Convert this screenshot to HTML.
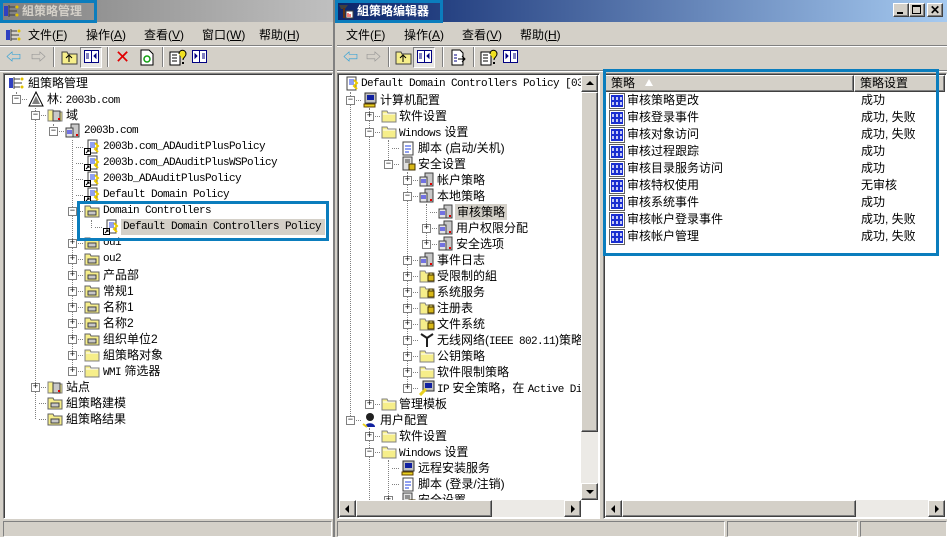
<!DOCTYPE html>
<html><head><meta charset="utf-8">
<style>
*{margin:0;padding:0;box-sizing:border-box}
body{width:947px;height:537px;overflow:hidden;background:#D4D0C8;position:relative;font-family:"Liberation Sans","Noto Sans CJK SC",sans-serif;font-size:12px;color:#000}
.a{position:absolute;white-space:nowrap}
.l{font-family:"Liberation Mono",monospace;font-size:11px;letter-spacing:-0.6px}
.r{position:absolute;height:16px;line-height:16px;white-space:nowrap}
.ic{position:absolute;width:16px;height:16px}
.ic::before{content:'';position:absolute;left:-8px;top:8px;width:7px;border-top:1px dotted #808080}
.ic.n::before{display:none}
.ex{position:absolute;width:9px;height:9px;border:1px solid #808080;background:#fff;font:9px/7px "Liberation Mono",monospace;text-align:center;z-index:2}
.v{position:absolute;border-left:1px dotted #808080;width:0}
.rb{position:absolute;background:#D4D0C8;border:1px solid;border-color:#fff #404040 #404040 #fff;box-shadow:inset -1px -1px #808080;white-space:nowrap}
.sk{position:absolute;border:1px solid;border-color:#808080 #fff #fff #808080;box-shadow:inset 1px 1px #404040}
.box{position:absolute;border:3px solid #0B7DBD;z-index:5}
.sep{position:absolute;width:2px;height:20px;border-left:1px solid #808080;border-right:1px solid #fff}
.tri{position:absolute;width:0;height:0}
.mn span{position:absolute;top:0}
svg{display:block}
</style></head><body>
<svg width="0" height="0" style="position:absolute">
<defs>
<symbol id="fo" viewBox="0 0 16 16"><path d="M1 3h5l1 2h8v9H1z" fill="#F6EE8A" stroke="#808080"/><path d="M2 6h12" stroke="#fff"/></symbol>
<symbol id="lf" viewBox="0 0 16 16"><path d="M1 3h5l1 2h8v9H1z" fill="#F6EE8A" stroke="#808080"/><rect x="9" y="7" width="6" height="6" fill="#D8B818" stroke="#403000"/><path d="M10 7V5h4v2" stroke="#403000" fill="none"/></symbol>
<symbol id="ou" viewBox="0 0 16 16"><path d="M1 3h5l1 2h8v9H1z" fill="#F6EE8A" stroke="#606060"/><path d="M4 8h8v4H4z" fill="#C8C8C8" stroke="#404040"/></symbol>
<symbol id="sv" viewBox="0 0 16 16"><rect x="6" y="1" width="8" height="13" fill="#C8C8C8" stroke="#404040"/><rect x="1" y="5" width="7" height="9" fill="#E4E4E4" stroke="#404040"/><path d="M2 8h5M2 10h5" stroke="#0000E0"/><rect x="11" y="11" width="2" height="2" fill="#E00000"/></symbol>
<symbol id="gp" viewBox="0 0 16 16"><rect x="4" y="1" width="9" height="13" fill="#fff" stroke="#404040"/><path d="M6 4h5M6 6h5M6 8h5" stroke="#2040E0"/><path d="M11 4l3 3-3 3 3 3" stroke="#E8C800" fill="none" stroke-width="2"/></symbol>
<symbol id="gl" viewBox="0 0 16 16"><rect x="4" y="1" width="9" height="13" fill="#fff" stroke="#404040"/><path d="M6 4h5M6 6h5M6 8h5" stroke="#2040E0"/><path d="M11 4l3 3-3 3 3 3" stroke="#E8C800" fill="none" stroke-width="2"/><rect x="0.5" y="9.5" width="6" height="6" fill="#fff" stroke="#000"/><path d="M2 14l3-3M3 11h2v2" stroke="#000" fill="none"/></symbol>
<symbol id="au" viewBox="0 0 16 16"><rect x="0.5" y="0.5" width="15" height="15" fill="#fff" stroke="#606060"/><rect x="2" y="2" width="12" height="12" fill="#1A2ED0"/><path d="M4 4v3M8 4v3M12 4v3M4 9v3M8 9v3M12 9v3" stroke="#fff" stroke-width="1.5"/></symbol>
<symbol id="pc" viewBox="0 0 16 16"><rect x="3" y="1" width="11" height="10" fill="#C0C0C0" stroke="#303030"/><rect x="5" y="3" width="7" height="5" fill="#1020A0"/><path d="M2 12h11v3H2z" fill="#E8D020" stroke="#604000"/></symbol>
<symbol id="us" viewBox="0 0 16 16"><circle cx="8" cy="5" r="4" fill="#202020"/><path d="M3 15c0-5 10-5 10 0z" fill="#1020A0"/><path d="M1 12l4 3" stroke="#E8D020" stroke-width="2"/></symbol>
<symbol id="sc" viewBox="0 0 16 16"><rect x="3" y="2" width="10" height="13" fill="#fff" stroke="#404040"/><path d="M5 6h6M5 9h6M5 12h4" stroke="#2040E0"/></symbol>
<symbol id="ss" viewBox="0 0 16 16"><rect x="3" y="1" width="9" height="13" fill="#E0E0E0" stroke="#404040"/><path d="M5 4h5M5 6h5" stroke="#404040"/><rect x="9" y="8" width="6" height="6" fill="#D8B818" stroke="#403000"/></symbol>
<symbol id="tr" viewBox="0 0 16 16"><path d="M8 1L1 15h14z" fill="#fff" stroke="#000"/><path d="M8 5L4 13h8z" fill="#808080"/></symbol>
<symbol id="dm" viewBox="0 0 16 16"><path d="M1 3h5l1 2h8v9H1z" fill="#F6EE8A" stroke="#808080"/><rect x="6" y="4" width="7" height="10" fill="#C8C8C8" stroke="#404040"/><rect x="11" y="11" width="2" height="2" fill="#E00000"/></symbol>
<symbol id="gm" viewBox="0 0 16 16"><rect x="1" y="3" width="4" height="10" fill="#3040C0"/><path d="M6 2v12M6 4h6M6 8h8M6 12h6" stroke="#404040"/><circle cx="14" cy="4" r="1.5" fill="#E0C000"/><circle cx="14" cy="12" r="1.5" fill="#E0C000"/></symbol>
<symbol id="ant" viewBox="0 0 16 16"><path d="M8 6v9M2 2l6 4 6-4" stroke="#202020" stroke-width="2" fill="none"/></symbol>
<symbol id="ip" viewBox="0 0 16 16"><rect x="4" y="1" width="11" height="10" fill="#C0C0C0" stroke="#303030"/><rect x="6" y="3" width="7" height="5" fill="#1020A0"/><path d="M1 15l6-6" stroke="#E8D020" stroke-width="3"/></symbol>
</defs></svg>

<!-- ================= LEFT WINDOW ================= -->
<div class="a" style="left:0;top:0;width:334px;height:22px;background:linear-gradient(90deg,#808080,#C0C0C0)"></div>
<div class="a" style="left:3px;top:3px"><svg width="16" height="16"><use href="#gm"/></svg></div>
<div class="a" style="left:22px;top:3px;color:#D4D0C8;font-weight:bold;font-size:12px;line-height:16px">組策略管理</div>
<div class="box" style="left:0;top:0;width:97px;height:23px"></div>
<div class="a" style="left:333px;top:0;width:2px;height:537px;background:#808080"></div>

<div class="a mn" style="left:0;top:26px;width:332px;height:18px;line-height:18px">
<svg class="a" style="left:5px;top:1px" width="16" height="16"><use href="#gm"/></svg>
<span style="left:28px">文件(<u>F</u>)</span><span style="left:86px">操作(<u>A</u>)</span><span style="left:144px">查看(<u>V</u>)</span><span style="left:202px">窗口(<u>W</u>)</span><span style="left:259px">帮助(<u>H</u>)</span>
</div>
<div class="a" style="left:0;top:45px;width:332px;border-top:1px solid #808080;border-bottom:1px solid #fff"></div>
<div class="a" style="left:6px;top:50px;color:#1E9BD8;font-size:15px;line-height:16px">&#x21E6;</div>
<div class="a" style="left:31px;top:50px;color:#909090;font-size:15px;line-height:16px">&#x21E8;</div>
<div class="sep" style="left:53px;top:47px"></div>
<svg class="a" style="left:61px;top:49px" width="17" height="17"><path d="M1 3h5l1 2h9v10H1z" fill="#F6EE8A" stroke="#404040"/><path d="M8 13V7M5 9l3-3 3 3" stroke="#000" fill="none"/></svg>
<div class="a" style="left:80px;top:47px;width:22px;height:21px;border:1px solid;border-color:#808080 #fff #fff #808080;background:#E8E6E2"></div>
<svg class="a" style="left:84px;top:50px" width="16" height="14"><rect x="0.5" y="0.5" width="14" height="12" fill="#fff" stroke="#000080"/><rect x="7" y="1" width="1" height="11" fill="#000080"/><path d="M2 4h3M2 6h3M2 8h3M10 6l2-2v4z" stroke="#000080" fill="#000080"/></svg>
<div class="sep" style="left:107px;top:47px"></div>
<div class="a" style="left:115px;top:47px;color:#E00000;font-size:18px;line-height:20px">✕</div>
<svg class="a" style="left:139px;top:49px" width="16" height="17"><path d="M2 1h8l4 4v11H2z" fill="#fff" stroke="#000"/><circle cx="8" cy="10" r="3" fill="none" stroke="#10A010" stroke-width="1.5"/></svg>
<div class="sep" style="left:162px;top:47px"></div>
<svg class="a" style="left:169px;top:48px" width="18" height="18"><rect x="1" y="4" width="10" height="13" fill="#fff" stroke="#000"/><path d="M3 7h5M3 10h5M3 13h5" stroke="#000"/><path d="M10 6c0-5 7-5 7 0 0 3-3 3-3 6" stroke="#000" stroke-width="1" fill="#F0E020"/><rect x="13" y="14" width="2" height="2"/></svg>
<svg class="a" style="left:192px;top:50px" width="16" height="14"><rect x="0.5" y="0.5" width="14" height="12" fill="#fff" stroke="#000080"/><rect x="7" y="1" width="1" height="11" fill="#000080"/><path d="M10 4h3M10 6h3M10 8h3M3 4l2 2-2 2z" stroke="#000080" fill="#000080"/></svg>
<div class="a" style="left:0;top:70px;width:333px;border-top:1px solid #808080;border-bottom:1px solid #fff"></div>

<div class="sk" style="left:3px;top:73px;width:330px;height:446px;background:#fff;overflow:hidden">
<div class="a" style="left:-4px;top:-74px;width:340px;height:540px">
<div class="v" style="left:35px;top:108px;height:311px"></div>
<div class="v" style="left:16px;top:92px;height:8px"></div>
<div class="v" style="left:53px;top:124px;height:8px"></div>
<div class="v" style="left:72px;top:140px;height:231px"></div>
<div class="v" style="left:91px;top:220px;height:8px"></div>

<div class="r" style="left:8px;top:75px"><span class="ic n" style="left:0"><svg width="16" height="16"><use href="#gm"/></svg></span><span style="position:absolute;left:20px">組策略管理</span></div>
<div class="ex" style="left:12px;top:95px">−</div><div class="r" style="left:28px;top:91px"><span class="ic"><svg width="16" height="16"><use href="#tr"/></svg></span><span style="position:absolute;left:19px">林: <span class="l">2003b.com</span></span></div>
<div class="ex" style="left:31px;top:111px">−</div><div class="r" style="left:47px;top:107px"><span class="ic"><svg width="16" height="16"><use href="#dm"/></svg></span><span style="position:absolute;left:19px">域</span></div>
<div class="ex" style="left:49px;top:127px">−</div><div class="r" style="left:65px;top:123px"><span class="ic"><svg width="16" height="16"><use href="#sv"/></svg></span><span style="position:absolute;left:19px" class="l">2003b.com</span></div>
<div class="r" style="left:84px;top:139px"><span class="ic"><svg width="16" height="16"><use href="#gl"/></svg></span><span style="position:absolute;left:19px" class="l">2003b.com_ADAuditPlusPolicy</span></div>
<div class="r" style="left:84px;top:155px"><span class="ic"><svg width="16" height="16"><use href="#gl"/></svg></span><span style="position:absolute;left:19px" class="l">2003b.com_ADAuditPlusWSPolicy</span></div>
<div class="r" style="left:84px;top:171px"><span class="ic"><svg width="16" height="16"><use href="#gl"/></svg></span><span style="position:absolute;left:19px" class="l">2003b_ADAuditPlusPolicy</span></div>
<div class="r" style="left:84px;top:187px"><span class="ic"><svg width="16" height="16"><use href="#gl"/></svg></span><span style="position:absolute;left:19px" class="l">Default Domain Policy</span></div>
<div class="ex" style="left:68px;top:207px">−</div><div class="r" style="left:84px;top:203px"><span class="ic"><svg width="16" height="16"><use href="#ou"/></svg></span><span style="position:absolute;left:19px" class="l">Domain Controllers</span></div>
<div class="r" style="left:103px;top:219px"><span class="ic"><svg width="16" height="16"><use href="#gl"/></svg></span><span style="position:absolute;left:18px;background:#D4D0C8;padding:0 2px;width:204px" class="l">Default Domain Controllers Policy</span></div>
<div class="ex" style="left:68px;top:239px">+</div><div class="r" style="left:84px;top:235px"><span class="ic"><svg width="16" height="16"><use href="#ou"/></svg></span><span style="position:absolute;left:19px" class="l">ou1</span></div>
<div class="ex" style="left:68px;top:255px">+</div><div class="r" style="left:84px;top:251px"><span class="ic"><svg width="16" height="16"><use href="#ou"/></svg></span><span style="position:absolute;left:19px" class="l">ou2</span></div>
<div class="ex" style="left:68px;top:271px">+</div><div class="r" style="left:84px;top:267px"><span class="ic"><svg width="16" height="16"><use href="#ou"/></svg></span><span style="position:absolute;left:19px">产品部</span></div>
<div class="ex" style="left:68px;top:287px">+</div><div class="r" style="left:84px;top:283px"><span class="ic"><svg width="16" height="16"><use href="#ou"/></svg></span><span style="position:absolute;left:19px">常规1</span></div>
<div class="ex" style="left:68px;top:303px">+</div><div class="r" style="left:84px;top:299px"><span class="ic"><svg width="16" height="16"><use href="#ou"/></svg></span><span style="position:absolute;left:19px">名称1</span></div>
<div class="ex" style="left:68px;top:319px">+</div><div class="r" style="left:84px;top:315px"><span class="ic"><svg width="16" height="16"><use href="#ou"/></svg></span><span style="position:absolute;left:19px">名称2</span></div>
<div class="ex" style="left:68px;top:335px">+</div><div class="r" style="left:84px;top:331px"><span class="ic"><svg width="16" height="16"><use href="#ou"/></svg></span><span style="position:absolute;left:19px">组织单位2</span></div>
<div class="ex" style="left:68px;top:351px">+</div><div class="r" style="left:84px;top:347px"><span class="ic"><svg width="16" height="16"><use href="#fo"/></svg></span><span style="position:absolute;left:19px">組策略对象</span></div>
<div class="ex" style="left:68px;top:367px">+</div><div class="r" style="left:84px;top:363px"><span class="ic"><svg width="16" height="16"><use href="#fo"/></svg></span><span style="position:absolute;left:19px"><span class="l">WMI</span> 筛选器</span></div>
<div class="ex" style="left:31px;top:383px">+</div><div class="r" style="left:47px;top:379px"><span class="ic"><svg width="16" height="16"><use href="#dm"/></svg></span><span style="position:absolute;left:19px">站点</span></div>
<div class="r" style="left:47px;top:395px"><span class="ic"><svg width="16" height="16"><use href="#ou"/></svg></span><span style="position:absolute;left:19px">組策略建模</span></div>
<div class="r" style="left:47px;top:411px"><span class="ic"><svg width="16" height="16"><use href="#ou"/></svg></span><span style="position:absolute;left:19px">組策略结果</span></div>
</div></div>
<div class="box" style="left:77px;top:201px;width:252px;height:40px"></div>
<div class="sk" style="left:3px;top:521px;width:329px;height:16px;box-shadow:none"></div>

<!-- ================= RIGHT WINDOW ================= -->
<div class="a" style="left:335px;top:0;width:612px;height:22px;background:linear-gradient(90deg,#0A246A,#A6CAF0)"></div>
<svg class="a" style="left:338px;top:3px" width="16" height="16"><path d="M1 2h9l-3 4H3z" fill="#404040"/><rect x="5" y="5" width="2" height="10" fill="#603010"/><rect x="8" y="8" width="7" height="7" fill="#fff" stroke="#404040"/><path d="M10 14v-4M12 14v-3" stroke="#E00000"/></svg>
<div class="a" style="left:357px;top:3px;color:#fff;font-weight:bold;line-height:16px">組策略编辑器</div>
<div class="box" style="left:335px;top:0;width:108px;height:23px"></div>
<div class="rb" style="left:893px;top:3px;width:16px;height:14px"><div class="a" style="left:3px;top:8px;width:6px;height:2px;background:#000"></div></div>
<div class="rb" style="left:909px;top:3px;width:16px;height:14px"><div class="a" style="left:2px;top:1px;width:9px;height:9px;border:1px solid #000;border-top-width:2px"></div></div>
<div class="rb" style="left:927px;top:3px;width:16px;height:14px;font:bold 12px/12px 'Liberation Sans';text-align:center">✕</div>

<div class="a mn" style="left:335px;top:26px;width:612px;height:18px;line-height:18px">
<span style="left:11px">文件(<u>F</u>)</span><span style="left:69px">操作(<u>A</u>)</span><span style="left:127px">查看(<u>V</u>)</span><span style="left:185px">帮助(<u>H</u>)</span>
</div>
<div class="a" style="left:337px;top:45px;width:610px;border-top:1px solid #808080;border-bottom:1px solid #fff"></div>
<div class="a" style="left:343px;top:50px;color:#1E9BD8;font-size:15px;line-height:16px">&#x21E6;</div>
<div class="a" style="left:366px;top:50px;color:#909090;font-size:15px;line-height:16px">&#x21E8;</div>
<div class="sep" style="left:388px;top:47px"></div>
<svg class="a" style="left:395px;top:49px" width="17" height="17"><path d="M1 3h5l1 2h9v10H1z" fill="#F6EE8A" stroke="#404040"/><path d="M8 13V7M5 9l3-3 3 3" stroke="#000" fill="none"/></svg>
<div class="a" style="left:413px;top:47px;width:22px;height:21px;border:1px solid;border-color:#808080 #fff #fff #808080;background:#E8E6E2"></div>
<svg class="a" style="left:417px;top:50px" width="16" height="14"><rect x="0.5" y="0.5" width="14" height="12" fill="#fff" stroke="#000080"/><rect x="7" y="1" width="1" height="11" fill="#000080"/><path d="M2 4h3M2 6h3M2 8h3M10 6l2-2v4z" stroke="#000080" fill="#000080"/></svg>
<div class="sep" style="left:442px;top:47px"></div>
<svg class="a" style="left:450px;top:49px" width="16" height="17"><path d="M2 1h8l3 3v12H2z" fill="#fff" stroke="#000"/><path d="M4 6h3M4 9h3M4 12h3" stroke="#000080"/><path d="M8 10h7M12 7l3 3-3 3" stroke="#000" fill="none"/></svg>
<div class="sep" style="left:473px;top:47px"></div>
<svg class="a" style="left:480px;top:48px" width="18" height="18"><rect x="1" y="4" width="10" height="13" fill="#fff" stroke="#000"/><path d="M3 7h5M3 10h5M3 13h5" stroke="#000"/><path d="M10 6c0-5 7-5 7 0 0 3-3 3-3 6" stroke="#000" fill="#F0E020"/><rect x="13" y="14" width="2" height="2"/></svg>
<svg class="a" style="left:503px;top:50px" width="16" height="14"><rect x="0.5" y="0.5" width="14" height="12" fill="#fff" stroke="#000080"/><rect x="7" y="1" width="1" height="11" fill="#000080"/><path d="M10 4h3M10 6h3M10 8h3M3 4l2 2-2 2z" stroke="#000080" fill="#000080"/></svg>
<div class="a" style="left:337px;top:70px;width:610px;border-top:1px solid #808080;border-bottom:1px solid #fff"></div>

<div class="sk" style="left:337px;top:73px;width:263px;height:446px;background:#fff"></div>
<div class="a" style="left:339px;top:75px;width:242px;height:425px;overflow:hidden;background:#fff">
<div class="a" style="left:-339px;top:-75px;width:600px;height:540px">
<div class="v" style="left:350px;top:92px;height:328px"></div>
<div class="v" style="left:369px;top:108px;height:296px"></div>
<div class="v" style="left:388px;top:140px;height:24px"></div>
<div class="v" style="left:407px;top:172px;height:216px"></div>
<div class="v" style="left:426px;top:204px;height:40px"></div>
<div class="v" style="left:369px;top:428px;height:80px"></div>
<div class="v" style="left:388px;top:460px;height:48px"></div>

<div class="r" style="left:343px;top:76px"><span class="ic n"><svg width="16" height="16"><use href="#gp"/></svg></span><span style="position:absolute;left:18px" class="l">Default Domain Controllers Policy [03b.com]</span></div>
<div class="ex" style="left:346px;top:96px">−</div><div class="r" style="left:362px;top:92px"><span class="ic"><svg width="16" height="16"><use href="#pc"/></svg></span><span style="position:absolute;left:18px">计算机配置</span></div>
<div class="ex" style="left:365px;top:112px">+</div><div class="r" style="left:381px;top:108px"><span class="ic"><svg width="16" height="16"><use href="#fo"/></svg></span><span style="position:absolute;left:18px">软件设置</span></div>
<div class="ex" style="left:365px;top:128px">−</div><div class="r" style="left:381px;top:124px"><span class="ic"><svg width="16" height="16"><use href="#fo"/></svg></span><span style="position:absolute;left:18px"><span class="l">Windows</span> 设置</span></div>
<div class="r" style="left:400px;top:140px"><span class="ic"><svg width="16" height="16"><use href="#sc"/></svg></span><span style="position:absolute;left:18px">脚本 (启动/关机)</span></div>
<div class="ex" style="left:384px;top:160px">−</div><div class="r" style="left:400px;top:156px"><span class="ic"><svg width="16" height="16"><use href="#ss"/></svg></span><span style="position:absolute;left:18px">安全设置</span></div>
<div class="ex" style="left:403px;top:176px">+</div><div class="r" style="left:419px;top:172px"><span class="ic"><svg width="16" height="16"><use href="#sv"/></svg></span><span style="position:absolute;left:18px">帐户策略</span></div>
<div class="ex" style="left:403px;top:192px">−</div><div class="r" style="left:419px;top:188px"><span class="ic"><svg width="16" height="16"><use href="#sv"/></svg></span><span style="position:absolute;left:18px">本地策略</span></div>
<div class="r" style="left:438px;top:204px"><span class="ic"><svg width="16" height="16"><use href="#sv"/></svg></span><span style="position:absolute;left:17px;background:#D4D0C8;padding:0 2px">审核策略</span></div>
<div class="ex" style="left:422px;top:224px">+</div><div class="r" style="left:438px;top:220px"><span class="ic"><svg width="16" height="16"><use href="#sv"/></svg></span><span style="position:absolute;left:18px">用户权限分配</span></div>
<div class="ex" style="left:422px;top:240px">+</div><div class="r" style="left:438px;top:236px"><span class="ic"><svg width="16" height="16"><use href="#sv"/></svg></span><span style="position:absolute;left:18px">安全选项</span></div>
<div class="ex" style="left:403px;top:256px">+</div><div class="r" style="left:419px;top:252px"><span class="ic"><svg width="16" height="16"><use href="#sv"/></svg></span><span style="position:absolute;left:18px">事件日志</span></div>
<div class="ex" style="left:403px;top:272px">+</div><div class="r" style="left:419px;top:268px"><span class="ic"><svg width="16" height="16"><use href="#lf"/></svg></span><span style="position:absolute;left:18px">受限制的組</span></div>
<div class="ex" style="left:403px;top:288px">+</div><div class="r" style="left:419px;top:284px"><span class="ic"><svg width="16" height="16"><use href="#lf"/></svg></span><span style="position:absolute;left:18px">系统服务</span></div>
<div class="ex" style="left:403px;top:304px">+</div><div class="r" style="left:419px;top:300px"><span class="ic"><svg width="16" height="16"><use href="#lf"/></svg></span><span style="position:absolute;left:18px">注册表</span></div>
<div class="ex" style="left:403px;top:320px">+</div><div class="r" style="left:419px;top:316px"><span class="ic"><svg width="16" height="16"><use href="#lf"/></svg></span><span style="position:absolute;left:18px">文件系统</span></div>
<div class="ex" style="left:403px;top:336px">+</div><div class="r" style="left:419px;top:332px"><span class="ic"><svg width="16" height="16"><use href="#ant"/></svg></span><span style="position:absolute;left:18px">无线网络(<span class="l">IEEE 802.11</span>)策略</span></div>
<div class="ex" style="left:403px;top:352px">+</div><div class="r" style="left:419px;top:348px"><span class="ic"><svg width="16" height="16"><use href="#fo"/></svg></span><span style="position:absolute;left:18px">公钥策略</span></div>
<div class="ex" style="left:403px;top:368px">+</div><div class="r" style="left:419px;top:364px"><span class="ic"><svg width="16" height="16"><use href="#fo"/></svg></span><span style="position:absolute;left:18px">软件限制策略</span></div>
<div class="ex" style="left:403px;top:384px">+</div><div class="r" style="left:419px;top:380px"><span class="ic"><svg width="16" height="16"><use href="#ip"/></svg></span><span style="position:absolute;left:18px"><span class="l">IP</span> 安全策略，在 <span class="l">Active Directory</span></span></div>
<div class="ex" style="left:365px;top:400px">+</div><div class="r" style="left:381px;top:396px"><span class="ic"><svg width="16" height="16"><use href="#fo"/></svg></span><span style="position:absolute;left:18px">管理模板</span></div>
<div class="ex" style="left:346px;top:416px">−</div><div class="r" style="left:362px;top:412px"><span class="ic"><svg width="16" height="16"><use href="#us"/></svg></span><span style="position:absolute;left:18px">用户配置</span></div>
<div class="ex" style="left:365px;top:432px">+</div><div class="r" style="left:381px;top:428px"><span class="ic"><svg width="16" height="16"><use href="#fo"/></svg></span><span style="position:absolute;left:18px">软件设置</span></div>
<div class="ex" style="left:365px;top:448px">−</div><div class="r" style="left:381px;top:444px"><span class="ic"><svg width="16" height="16"><use href="#fo"/></svg></span><span style="position:absolute;left:18px"><span class="l">Windows</span> 设置</span></div>
<div class="r" style="left:400px;top:460px"><span class="ic"><svg width="16" height="16"><use href="#pc"/></svg></span><span style="position:absolute;left:18px">远程安装服务</span></div>
<div class="r" style="left:400px;top:476px"><span class="ic"><svg width="16" height="16"><use href="#sc"/></svg></span><span style="position:absolute;left:18px">脚本 (登录/注销)</span></div>
<div class="ex" style="left:384px;top:496px">+</div><div class="r" style="left:400px;top:492px"><span class="ic"><svg width="16" height="16"><use href="#ss"/></svg></span><span style="position:absolute;left:18px">安全设置</span></div>
</div></div>
<div class="a" style="left:581px;top:75px;width:17px;height:425px;background:#ECEAE6"></div>
<div class="rb" style="left:581px;top:75px;width:17px;height:17px"><div class="tri" style="left:4px;top:5px;border-left:4px solid transparent;border-right:4px solid transparent;border-bottom:4px solid #000"></div></div>
<div class="rb" style="left:581px;top:92px;width:17px;height:340px"></div>
<div class="rb" style="left:581px;top:483px;width:17px;height:17px"><div class="tri" style="left:4px;top:6px;border-left:4px solid transparent;border-right:4px solid transparent;border-top:4px solid #000"></div></div>
<div class="a" style="left:339px;top:500px;width:242px;height:17px;background:#ECEAE6"></div>
<div class="rb" style="left:339px;top:500px;width:17px;height:17px"><div class="tri" style="left:5px;top:4px;border-top:4px solid transparent;border-bottom:4px solid transparent;border-right:4px solid #000"></div></div>
<div class="rb" style="left:356px;top:500px;width:136px;height:17px"></div>
<div class="rb" style="left:564px;top:500px;width:17px;height:17px"><div class="tri" style="left:6px;top:4px;border-top:4px solid transparent;border-bottom:4px solid transparent;border-left:4px solid #000"></div></div>

<div class="sk" style="left:603px;top:73px;width:344px;height:446px;background:#fff"></div>
<div class="rb" style="left:605px;top:75px;width:249px;height:17px;line-height:15px;padding-left:5px">策略</div>
<div class="tri" style="left:645px;top:79px;border-left:4px solid transparent;border-right:4px solid transparent;border-bottom:7px solid #fff"></div>
<div class="rb" style="left:854px;top:75px;width:91px;height:17px;line-height:15px;padding-left:5px">策略设置</div>
<div class="a" style="left:609px;top:92px;width:336px;line-height:17px">
<div style="height:17px;position:relative"><svg class="a" style="left:0;top:1px" width="16" height="16"><use href="#au"/></svg><span class="a" style="left:18px">审核策略更改</span><span class="a" style="left:252px">成功</span></div>
<div style="height:17px;position:relative"><svg class="a" style="left:0;top:1px" width="16" height="16"><use href="#au"/></svg><span class="a" style="left:18px">审核登录事件</span><span class="a" style="left:252px">成功, 失败</span></div>
<div style="height:17px;position:relative"><svg class="a" style="left:0;top:1px" width="16" height="16"><use href="#au"/></svg><span class="a" style="left:18px">审核对象访问</span><span class="a" style="left:252px">成功, 失败</span></div>
<div style="height:17px;position:relative"><svg class="a" style="left:0;top:1px" width="16" height="16"><use href="#au"/></svg><span class="a" style="left:18px">审核过程跟踪</span><span class="a" style="left:252px">成功</span></div>
<div style="height:17px;position:relative"><svg class="a" style="left:0;top:1px" width="16" height="16"><use href="#au"/></svg><span class="a" style="left:18px">审核目录服务访问</span><span class="a" style="left:252px">成功</span></div>
<div style="height:17px;position:relative"><svg class="a" style="left:0;top:1px" width="16" height="16"><use href="#au"/></svg><span class="a" style="left:18px">审核特权使用</span><span class="a" style="left:252px">无审核</span></div>
<div style="height:17px;position:relative"><svg class="a" style="left:0;top:1px" width="16" height="16"><use href="#au"/></svg><span class="a" style="left:18px">审核系统事件</span><span class="a" style="left:252px">成功</span></div>
<div style="height:17px;position:relative"><svg class="a" style="left:0;top:1px" width="16" height="16"><use href="#au"/></svg><span class="a" style="left:18px">审核帐户登录事件</span><span class="a" style="left:252px">成功, 失败</span></div>
<div style="height:17px;position:relative"><svg class="a" style="left:0;top:1px" width="16" height="16"><use href="#au"/></svg><span class="a" style="left:18px">审核帐户管理</span><span class="a" style="left:252px">成功, 失败</span></div>
</div>
<div class="box" style="left:603px;top:69px;width:336px;height:187px"></div>
<div class="a" style="left:605px;top:500px;width:340px;height:17px;background:#ECEAE6"></div>
<div class="rb" style="left:605px;top:500px;width:17px;height:17px"><div class="tri" style="left:5px;top:4px;border-top:4px solid transparent;border-bottom:4px solid transparent;border-right:4px solid #000"></div></div>
<div class="rb" style="left:622px;top:500px;width:234px;height:17px"></div>
<div class="rb" style="left:928px;top:500px;width:17px;height:17px"><div class="tri" style="left:6px;top:4px;border-top:4px solid transparent;border-bottom:4px solid transparent;border-left:4px solid #000"></div></div>

<div class="sk" style="left:337px;top:521px;width:388px;height:16px;box-shadow:none"></div>
<div class="sk" style="left:727px;top:521px;width:131px;height:16px;box-shadow:none"></div>
<div class="sk" style="left:860px;top:521px;width:87px;height:16px;box-shadow:none"></div>
</body></html>
